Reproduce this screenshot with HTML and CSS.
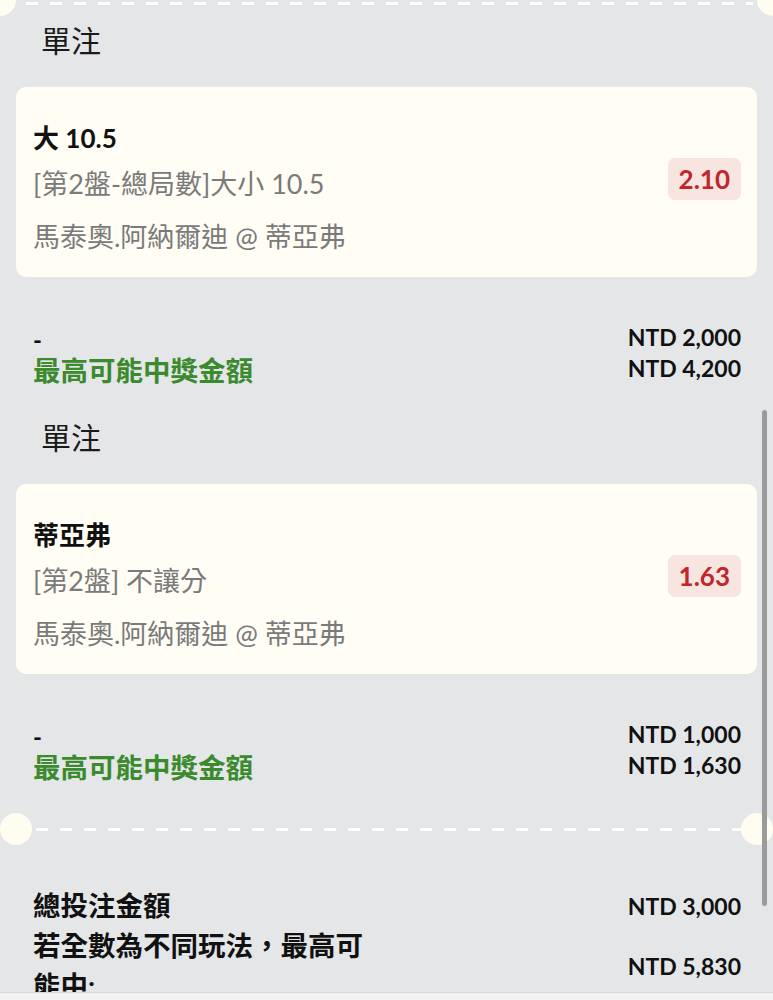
FILE: index.html
```html
<!DOCTYPE html>
<html lang="zh-Hant">
<head>
    <meta charset="UTF-8">
    <meta name="viewport" content="width=device-width, initial-scale=1.0">
    <title>投注單</title>
    <link rel="stylesheet" href="styles.css">
</head>
<body>
    <div class="ticket">
        <div class="perf perf-top">
            <span class="notch notch-left"></span>
            <span class="notch notch-right"></span>
        </div>

        <div class="bet">
            <h2 class="bet-type">單注</h2>
            <div class="card">
                <div class="card-info">
                    <div class="selection">大 10.5</div>
                    <div class="market">[第2盤-總局數]大小 10.5</div>
                    <div class="match">馬泰奧.阿納爾迪 @ 蒂亞弗</div>
                </div>
                <div class="odds">2.10</div>
            </div>
            <div class="summary">
                <div class="summary-left">
                    <div class="stake-label">-</div>
                    <div class="win-label">最高可能中獎金額</div>
                </div>
                <div class="summary-right">
                    <div>NTD 2,000</div>
                    <div>NTD 4,200</div>
                </div>
            </div>
        </div>

        <div class="bet">
            <h2 class="bet-type">單注</h2>
            <div class="card">
                <div class="card-info">
                    <div class="selection">蒂亞弗</div>
                    <div class="market">[第2盤] 不讓分</div>
                    <div class="match">馬泰奧.阿納爾迪 @ 蒂亞弗</div>
                </div>
                <div class="odds">1.63</div>
            </div>
            <div class="summary">
                <div class="summary-left">
                    <div class="stake-label">-</div>
                    <div class="win-label">最高可能中獎金額</div>
                </div>
                <div class="summary-right">
                    <div>NTD 1,000</div>
                    <div>NTD 1,630</div>
                </div>
            </div>
        </div>

        <div class="perf perf-mid">
            <span class="notch notch-left"></span>
            <span class="notch notch-right"></span>
        </div>

        <div class="totals">
            <div class="total-row">
                <div class="total-label">總投注金額</div>
                <div class="total-value">NTD 3,000</div>
            </div>
            <div class="total-row">
                <div class="total-label">若全數為不同玩法，最高可能中:</div>
                <div class="total-value">NTD 5,830</div>
            </div>
        </div>
    </div>

    <div class="scrollbar"></div>
    <div class="bottom-bar"></div>
</body>
</html>
```

FILE: styles.css
```css
body {
    margin: 0;
    padding: 0;
    background-color: #e5e6e8;
    font-family: Lato, "Noto Sans CJK TC", sans-serif;
    color: #111;
    overflow: hidden;
}
.ticket {
    padding: 0 16px;
}
.perf {
    position: relative;
    height: 3px;
    background: repeating-linear-gradient(to right, #fff 0 12px, transparent 12px 24px);
}
.perf-top {
    margin: 2px 4px 0 10px;
}
.perf-mid {
    margin: 45px 4px 0 20px;
}
.notch {
    position: absolute;
    width: 32px;
    height: 32px;
    border-radius: 50%;
    background-color: #fffdf0;
}
.perf-top .notch {
    top: -18px;
}
.perf-top .notch-left {
    left: -42px;
}
.perf-top .notch-right {
    right: -36px;
}
.perf-mid .notch {
    top: -15px;
}
.perf-mid .notch-left {
    left: -36px;
}
.perf-mid .notch-right {
    right: -20px;
}
.bet {
    margin-top: 15px;
}
.bet + .bet {
    margin-top: 31px;
}
.bet-type {
    margin: 0;
    padding-left: 25px;
    font-size: 30px;
    font-weight: normal;
    line-height: 40px;
    color: #1a1a1a;
}
.card {
    margin-top: 27px;
    background-color: #fffdf4;
    border-radius: 10px;
    padding: 33px 16px 22px 17px;
    display: flex;
    align-items: flex-start;
    justify-content: space-between;
}
.card-info {
    font-size: 27px;
    line-height: 36px;
}
.selection {
    font-weight: bold;
    font-size: 26px;
    color: #111;
}
.market {
    margin-top: 10px;
    color: #7a7a7a;
}
.match {
    margin-top: 17px;
    color: #7a7a7a;
}
.odds {
    margin-top: 38px;
    background-color: #f8e5df;
    color: #c0262b;
    font-weight: bold;
    font-size: 26px;
    line-height: 42px;
    padding: 0 11px;
    border-radius: 7px;
}
.summary {
    margin-top: 47px;
    padding: 0 16px 0 17px;
    display: flex;
    justify-content: space-between;
    font-weight: bold;
    line-height: 31px;
}
.stake-label {
    font-size: 24px;
}
.win-label {
    font-size: 27.5px;
    color: #3b8a2e;
}
.summary-right {
    font-size: 23px;
    text-align: right;
    margin-top: -2px;
}
.totals {
    margin-top: 55px;
    padding: 0 16px 0 17px;
}
.total-row {
    display: flex;
    justify-content: space-between;
    align-items: center;
}
.total-label {
    width: 345px;
    font-size: 27.5px;
    font-weight: bold;
    line-height: 40px;
}
.total-value {
    font-size: 23px;
    font-weight: bold;
}
.scrollbar {
    position: fixed;
    left: 762px;
    top: 410px;
    width: 5px;
    height: 496px;
    border-radius: 3px;
    background-color: #9b9b9b;
}
.bottom-bar {
    position: fixed;
    left: 0;
    right: 0;
    bottom: 0;
    height: 7px;
    background-color: #f3f3f4;
    border-top: 1px solid #d9d9db;
}
```
